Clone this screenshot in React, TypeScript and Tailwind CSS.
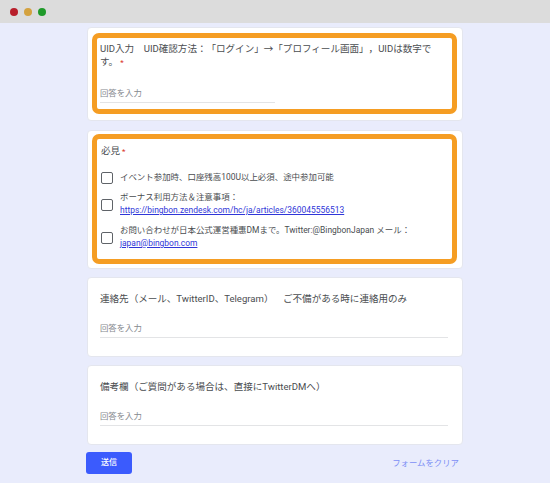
import React from 'react';

const font = { fontFamily: 'Roboto, "Noto Sans CJK JP", sans-serif' };

const Dot = ({ className }: { className: string }) => (
  <span className={`w-2 h-2 rounded-full ${className}`} />
);

const Highlight = ({ className }: { className: string }) => (
  <div className={`absolute border-[5px] border-[#f59d23] rounded-[7px] ${className}`} />
);

const TextAnswer = ({ title }: { title: string }) => (
  <div className="h-[80px] bg-white rounded-[4px] border border-[#e4e6ee] pl-[12px] pr-[14px] pt-[14px]">
    <div className="text-[9.55px] leading-[13px] text-[#4a4d50]">{title}</div>
    <div className="mt-[18px] text-[8.4px] leading-[11px] text-[#85898e] pb-[3px] border-b border-[#e3e4e6]">
      回答を入力
    </div>
  </div>
);

const Option = ({ children, className }: { children: React.ReactNode; className?: string }) => (
  <div className={`flex items-center gap-[7px] ${className ?? ''}`}>
    <span className="w-[12px] h-[12px] mt-[2px] shrink-0 border-[1.5px] border-[#5f6368] rounded-[2px]" />
    <div className="text-[8.45px] leading-[13px] text-[#4a4d50]">{children}</div>
  </div>
);

export default function App() {
  return (
    <div className="w-[550px] h-[483px] bg-[#e9ecfc] overflow-hidden [text-spacing-trim:space-all]" style={font}>
      <div className="h-[23px] bg-[#dcdcdc] flex items-center gap-[6px] pl-[10px]">
        <Dot className="bg-[#b81f2b]" />
        <Dot className="bg-[#d4a23f]" />
        <Dot className="bg-[#1f9a2a]" />
      </div>

      <div className="w-[376px] ml-[87px] mt-[4px] flex flex-col">
        <div className="relative h-[94px] bg-white rounded-[4px] border border-[#e4e6ee] pl-[12px] pr-[28px] pt-[14px]">
          <Highlight className="left-[4px] right-[5px] top-[5px] bottom-[6px]" />
          <div className="text-[9.55px] leading-[13px] text-[#4a4d50]">
            UID入力　UID確認方法：「ログイン」→「プロフィール画面」，UIDは数字です。
            <span className="text-[8px] text-[#d93025]"> *</span>
          </div>
          <div className="mt-[19px] w-[175px] text-[8.4px] leading-[11px] text-[#85898e] pb-[3px] border-b border-[#e3e4e6]">
            回答を入力
          </div>
        </div>

        <div className="relative h-[139px] mt-[9px] bg-white rounded-[4px] border border-[#e4e6ee] pl-[13px] pr-[8px] pt-[13px]">
          <Highlight className="left-[4px] right-[5px] top-[3px] bottom-[4px]" />
          <div className="text-[9.55px] leading-[13px] text-[#4a4d50]">
            必見<span className="text-[8px] text-[#d93025]"> *</span>
          </div>
          <Option className="mt-[12px]">イベント参加時、口座残高100U以上必須、途中参加可能</Option>
          <Option className="mt-[7px]">
            <div>ボーナス利用方法＆注意事項：</div>
            <a className="text-[#2f36d8] underline">https://bingbon.zendesk.com/hc/ja/articles/360045556513</a>
          </Option>
          <Option className="mt-[7px]">
            <div>お問い合わせが日本公式運営種惠DMまで。Twitter:@BingbonJapan メール：</div>
            <a className="text-[#2f36d8] underline">japan@bingbon.com</a>
          </Option>
        </div>

        <div className="mt-[8px]">
          <TextAnswer title="連絡先（メール、TwitterID、Telegram）　ご不備がある時に連絡用のみ" />
        </div>
        <div className="mt-[8px]">
          <TextAnswer title="備考欄（ご質問がある場合は、直接にTwitterDMへ）" />
        </div>
      </div>

      <div className="w-[377px] ml-[86px] mt-[7px] flex items-center justify-between">
        <button className="w-[46px] h-[22px] bg-[#3b5bfd] rounded-[3px] text-white text-[8px] font-medium">送信</button>
        <span className="mr-[4px] text-[8.4px] text-[#7d8ff5]">フォームをクリア</span>
      </div>
    </div>
  );
}
